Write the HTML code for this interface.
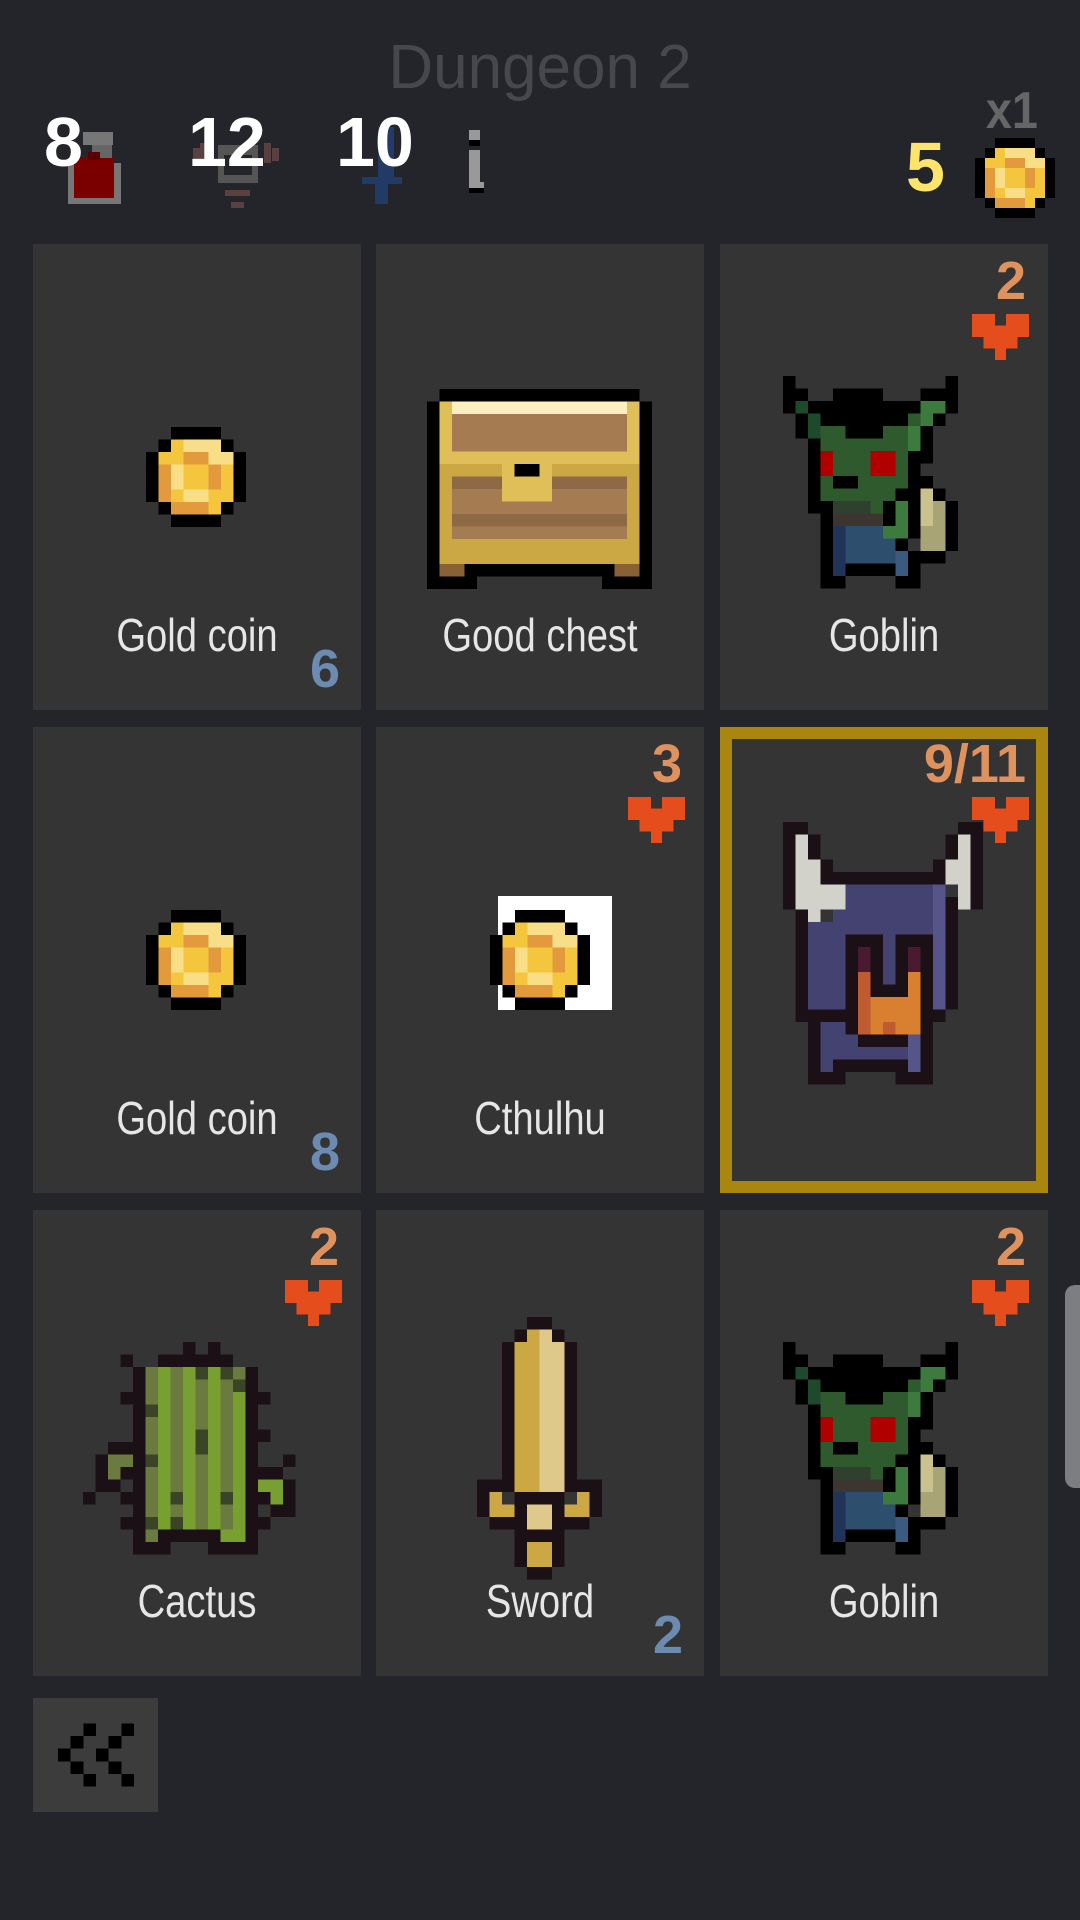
<!DOCTYPE html>
<html><head><meta charset="utf-8"><style>
*{margin:0;padding:0;box-sizing:border-box}
body{width:1080px;height:1920px;background:#23252a;position:relative;overflow:hidden;font-family:"Liberation Sans",sans-serif}
.a{position:absolute}
.card{position:absolute;width:328px;height:466px;background:#343434}
.lbl{position:absolute;left:0;width:328px;top:368px;text-align:center;color:#e6e6e6;font-size:46px;line-height:46px;transform:scaleX(0.83)}
.cnt{position:absolute;right:21px;top:398px;color:#6c8bb0;font-size:54px;line-height:54px;font-weight:bold}
.hp{position:absolute;right:22px;top:10px;color:#e0925e;font-size:54px;line-height:54px;font-weight:bold;text-align:right}
.heart{position:absolute;right:19px;top:70px;width:57px;height:46px}
svg{shape-rendering:crispEdges}
.big{font-weight:bold;color:#fff;font-size:70px;line-height:70px;top:107px}
</style></head><body>

<div class="a" style="left:0;width:1080px;top:37px;text-align:center;color:#46484c;font-size:62px;line-height:62px">Dungeon 2</div>

<!-- potion -->
<svg class="a" style="left:68px;top:132px" width="53" height="72" viewBox="0 0 53 72">
<rect x="15" y="0" width="30" height="13" fill="#777"/><rect x="24" y="13" width="20" height="15" fill="#666"/><rect x="0" y="31" width="53" height="41" fill="#777"/><rect x="6" y="26" width="40" height="40" fill="#7a0000"/><rect x="20" y="20" width="12" height="8" fill="#5a0000"/></svg>
<div class="a big" style="left:44px">8</div>
<!-- shield faint -->
<svg class="a" style="left:190px;top:140px" width="90" height="75" viewBox="0 0 90 75">
<rect x="28" y="5" width="40" height="38" fill="#555"/><rect x="34" y="15" width="28" height="20" fill="#23252a"/><rect x="3" y="8" width="8" height="13" fill="#5a4040"/><rect x="10" y="3" width="8" height="23" fill="#5a4040"/><rect x="74" y="3" width="7" height="20" fill="#5a4040"/><rect x="82" y="8" width="7" height="13" fill="#5a4040"/><rect x="35" y="50" width="25" height="6" fill="#5a4040"/><rect x="41" y="62" width="13" height="6" fill="#5a4040"/></svg>
<div class="a big" style="left:188px">12</div>
<!-- blue sword -->
<svg class="a" style="left:362px;top:127px" width="42" height="78" viewBox="0 0 42 78">
<rect x="16" y="0" width="16" height="50" fill="#223a66"/><rect x="0" y="50" width="40" height="7" fill="#223a66"/><rect x="13" y="57" width="13" height="20" fill="#223a66"/></svg>
<div class="a big" style="left:336px">10</div>
<svg class="a" style="left:468px;top:130px" width="18" height="64" viewBox="0 0 18 64">
<rect x="1" y="0" width="11" height="10" fill="#999"/><rect x="1" y="10" width="11" height="6" fill="#000"/><rect x="1" y="20" width="11" height="38" fill="#999"/><rect x="11" y="52" width="5" height="6" fill="#999"/><rect x="1" y="58" width="15" height="5" fill="#000"/></svg>

<div class="a" style="left:983px;top:85px;color:#666;font-size:52px;line-height:52px;font-weight:bold;transform:scaleX(0.9)">x1</div>
<div class="a" style="left:906px;top:132px;color:#fde46a;font-size:70px;line-height:70px;font-weight:bold">5</div>
<svg class="a" style="left:975px;top:138px" width="80" height="80" viewBox="0 0 8 8"><use href="#coin"/></svg>

<svg width="0" height="0" style="position:absolute">
<defs>
<g id="coin">
<rect x="2" y="0" width="4" height="1" fill="#000"/>
<rect x="1" y="1" width="1" height="1" fill="#000"/><rect x="2" y="1" width="1" height="1" fill="#f4c63e"/><rect x="3" y="1" width="3" height="1" fill="#f9de88"/><rect x="6" y="1" width="1" height="1" fill="#000"/>
<rect x="0" y="2" width="1" height="4" fill="#000"/><rect x="7" y="2" width="1" height="4" fill="#000"/>
<rect x="1" y="2" width="2" height="1" fill="#f4c63e"/><rect x="3" y="2" width="2" height="1" fill="#e39a3c"/><rect x="5" y="2" width="2" height="1" fill="#f9de88"/>
<rect x="1" y="3" width="1" height="2" fill="#e39a3c"/><rect x="2" y="3" width="1" height="2" fill="#f9de88"/><rect x="3" y="3" width="2" height="2" fill="#f4c63e"/><rect x="5" y="3" width="1" height="2" fill="#e39a3c"/><rect x="6" y="3" width="1" height="2" fill="#f4c63e"/>
<rect x="1" y="5" width="1" height="1" fill="#e39a3c"/><rect x="2" y="5" width="1" height="1" fill="#f4c63e"/><rect x="3" y="5" width="2" height="1" fill="#f9de88"/><rect x="5" y="5" width="2" height="1" fill="#f4c63e"/>
<rect x="1" y="6" width="1" height="1" fill="#000"/><rect x="2" y="6" width="3" height="1" fill="#e39a3c"/><rect x="5" y="6" width="1" height="1" fill="#f4c63e"/><rect x="6" y="6" width="1" height="1" fill="#000"/>
<rect x="2" y="7" width="4" height="1" fill="#000"/>
</g>
<g id="heart" fill="#e54d1c"><rect x="0" y="0" width="2" height="1"/><rect x="3" y="0" width="2" height="1"/><rect x="0" y="1" width="5" height="1"/><rect x="1" y="2" width="3" height="1"/><rect x="2" y="3" width="1" height="1"/></g>
<g id="goblin">
<g fill="#000">
<rect x="0" y="0" width="1" height="1"/><rect x="13" y="0" width="1" height="1"/>
<rect x="0" y="1" width="2" height="1"/><rect x="4" y="1" width="4" height="1"/><rect x="11" y="1" width="3" height="1"/>
<rect x="0" y="2" width="1" height="1"/><rect x="2" y="2" width="9" height="1"/><rect x="13" y="2" width="1" height="1"/>
<rect x="1" y="3" width="1" height="1"/><rect x="3" y="3" width="7" height="1"/><rect x="12" y="3" width="1" height="1"/>
<rect x="1" y="4" width="1" height="1"/><rect x="5" y="4" width="3" height="1"/><rect x="11" y="4" width="1" height="1"/>
<rect x="2" y="5" width="1" height="6"/><rect x="11" y="5" width="1" height="1"/>
<rect x="10" y="6" width="2" height="1"/><rect x="10" y="7" width="1" height="1"/>
<rect x="4" y="8" width="2" height="1"/><rect x="10" y="8" width="2" height="1"/>
<rect x="9" y="9" width="2" height="1"/><rect x="12" y="9" width="1" height="1"/>
<rect x="3" y="10" width="1" height="6"/><rect x="8" y="10" width="1" height="2"/><rect x="10" y="10" width="1" height="3"/><rect x="13" y="10" width="1" height="4"/>
<rect x="9" y="13" width="1" height="1"/><rect x="10" y="14" width="3" height="1"/>
<rect x="5" y="15" width="4" height="1"/><rect x="10" y="15" width="1" height="1"/>
<rect x="3" y="16" width="2" height="1"/><rect x="9" y="16" width="2" height="1"/>
</g>
<rect x="1" y="2" width="1" height="1" fill="#1e4a2c"/><rect x="2" y="3" width="1" height="2" fill="#1e4a2c"/>
<rect x="11" y="2" width="2" height="1" fill="#3d7a3d"/><rect x="10" y="3" width="1" height="1" fill="#2e5a2d"/><rect x="11" y="3" width="1" height="1" fill="#3d7a3d"/>
<rect x="3" y="4" width="2" height="1" fill="#2e5a2d"/><rect x="8" y="4" width="2" height="1" fill="#2e5a2d"/><rect x="10" y="4" width="1" height="2" fill="#3d7a3d"/>
<rect x="3" y="5" width="7" height="1" fill="#2e5a2d"/>
<rect x="3" y="6" width="7" height="2" fill="#2e5a2d"/><rect x="3" y="6" width="1" height="2" fill="#b00000"/><rect x="7" y="6" width="2" height="2" fill="#b00000"/>
<rect x="3" y="8" width="1" height="1" fill="#2e5a2d"/><rect x="6" y="8" width="4" height="1" fill="#2e5a2d"/>
<rect x="3" y="9" width="6" height="1" fill="#2e5a2d"/>
<rect x="4" y="10" width="3" height="1" fill="#2f402f"/><rect x="7" y="10" width="1" height="1" fill="#2e5a2d"/>
<rect x="9" y="10" width="1" height="3" fill="#3d7a3d"/><rect x="8" y="12" width="1" height="1" fill="#3d7a3d"/>
<rect x="4" y="11" width="4" height="1" fill="#3d3530"/>
<rect x="11" y="9" width="1" height="1" fill="#c9c28f"/><rect x="11" y="10" width="2" height="4" fill="#a9a476"/><rect x="11" y="10" width="1" height="2" fill="#c9c28f"/>
<rect x="4" y="12" width="1" height="4" fill="#213458"/><rect x="5" y="12" width="3" height="1" fill="#2e4e6e"/><rect x="5" y="13" width="4" height="2" fill="#2e4e6e"/><rect x="9" y="14" width="1" height="2" fill="#3a5a80"/>
</g>
</defs></svg>

<!-- Row 1 -->
<div class="card" style="left:33px;top:244px">
<svg class="a" style="left:113px;top:183px" width="100" height="100" viewBox="0 0 8 8"><use href="#coin"/></svg>
<div class="lbl">Gold coin</div><div class="cnt">6</div></div>

<div class="card" style="left:376px;top:244px">
<svg class="a" style="left:51px;top:145px" width="225" height="200" viewBox="0 0 18 16">
<rect x="1" y="0" width="16" height="1" fill="#000"/><rect x="0" y="1" width="1" height="15" fill="#000"/><rect x="17" y="1" width="1" height="15" fill="#000"/>
<rect x="1" y="1" width="16" height="13" fill="#e0bf58"/><rect x="2" y="1" width="14" height="1" fill="#fdf0c0"/><rect x="2" y="2" width="14" height="3" fill="#a57c52"/>
<rect x="1" y="6" width="16" height="7" fill="#cba843"/><rect x="2" y="7" width="14" height="5" fill="#a57c52"/><rect x="2" y="7" width="14" height="1" fill="#8d6a45"/><rect x="2" y="10" width="14" height="1" fill="#8d6a45"/>
<rect x="6" y="6" width="4" height="3" fill="#e0bf58"/><rect x="7" y="6" width="2" height="1" fill="#000"/>
<rect x="1" y="13" width="16" height="1" fill="#cba843"/>
<rect x="1" y="14" width="16" height="2" fill="#000"/><rect x="1" y="14" width="2" height="1" fill="#8a6135"/><rect x="15" y="14" width="2" height="1" fill="#8a6135"/><rect x="4" y="15" width="10" height="1" fill="#343434"/>
</svg>
<div class="lbl">Good chest</div></div>

<div class="card" style="left:720px;top:244px">
<svg class="a" style="left:63px;top:132px" width="175" height="212.5" viewBox="0 0 14 17"><use href="#goblin"/></svg>
<div class="hp">2</div><svg class="heart" viewBox="0 0 5 4"><use href="#heart"/></svg>
<div class="lbl">Goblin</div></div>

<!-- Row 2 -->
<div class="card" style="left:33px;top:727px">
<svg class="a" style="left:113px;top:183px" width="100" height="100" viewBox="0 0 8 8"><use href="#coin"/></svg>
<div class="lbl">Gold coin</div><div class="cnt">8</div></div>

<div class="card" style="left:376px;top:727px">
<div class="a" style="left:122px;top:169px;width:114px;height:114px;background:#fff"></div>
<svg class="a" style="left:114px;top:183px" width="100" height="100" viewBox="0 0 8 8"><use href="#coin"/></svg>
<div class="hp">3</div><svg class="heart" viewBox="0 0 5 4"><use href="#heart"/></svg>
<div class="lbl">Cthulhu</div></div>

<div class="card" style="left:720px;top:727px;border:12px solid #a8860f">
<svg class="a" style="left:51px;top:83px" width="200" height="262.5" viewBox="0 0 16 21">
<g fill="#1b1016">
<rect x="0" y="0" width="2" height="1"/><rect x="14" y="0" width="2" height="1"/>
<rect x="0" y="1" width="1" height="6"/><rect x="15" y="1" width="1" height="6"/>
<rect x="2" y="1" width="1" height="2"/><rect x="13" y="1" width="1" height="2"/>
<rect x="3" y="3" width="1" height="2"/><rect x="12" y="3" width="1" height="2"/>
<rect x="3" y="4" width="10" height="1"/>
<rect x="1" y="6" width="1" height="10"/><rect x="13" y="6" width="1" height="9"/><rect x="14" y="6" width="1" height="1"/>
<rect x="1" y="15" width="5" height="1"/><rect x="12" y="15" width="1" height="1"/>
<rect x="5" y="9" width="3" height="1"/><rect x="9" y="9" width="3" height="1"/>
<rect x="5" y="10" width="1" height="7"/><rect x="7" y="10" width="1" height="4"/><rect x="9" y="10" width="1" height="4"/><rect x="11" y="10" width="1" height="7"/>
<rect x="7" y="13" width="3" height="1"/>
<rect x="2" y="16" width="1" height="5"/><rect x="11" y="16" width="1" height="5"/>
<rect x="6" y="17" width="4" height="1"/><rect x="4" y="19" width="6" height="1"/>
<rect x="2" y="20" width="3" height="1"/><rect x="9" y="20" width="3" height="1"/>
</g>
<g fill="#d2d2ca"><rect x="1" y="1" width="1" height="6"/><rect x="2" y="3" width="1" height="5"/><rect x="3" y="5" width="2" height="2"/><rect x="14" y="1" width="1" height="6"/><rect x="13" y="3" width="1" height="2"/></g>
<rect x="5" y="5" width="7" height="4" fill="#434270"/><rect x="4" y="7" width="1" height="2" fill="#434270"/><rect x="2" y="8" width="3" height="7" fill="#434270"/><rect x="8" y="9" width="1" height="4" fill="#434270"/>
<rect x="12" y="5" width="1" height="10" fill="#55558a"/>
<rect x="6" y="10" width="1" height="2" fill="#4a1a30"/><rect x="10" y="10" width="1" height="2" fill="#4a1a30"/>
<rect x="6" y="12" width="1" height="5" fill="#c05a30"/><rect x="10" y="12" width="1" height="3" fill="#d8802f"/><rect x="7" y="14" width="4" height="3" fill="#d8802f"/><rect x="8" y="16" width="1" height="1" fill="#c05a30"/>
<rect x="3" y="16" width="2" height="3" fill="#434270"/><rect x="5" y="17" width="1" height="2" fill="#434270"/><rect x="6" y="18" width="4" height="1" fill="#434270"/><rect x="10" y="17" width="1" height="3" fill="#55558a"/><rect x="3" y="19" width="1" height="1" fill="#434270"/>
</svg>
<div class="hp" style="right:10px;top:-2px">9/11</div><svg class="heart" style="right:7px;top:58px" viewBox="0 0 5 4"><use href="#heart"/></svg>
</div>

<!-- Row 3 -->
<div class="card" style="left:33px;top:1210px">
<svg class="a" style="left:50px;top:132px" width="212.5" height="212.5" viewBox="0 0 17 17">
<g fill="#6b7a3e"><rect x="5" y="2" width="8" height="13"/></g>
<g fill="#77a030"><rect x="6" y="2" width="1" height="13"/><rect x="8" y="2" width="1" height="13"/><rect x="10" y="2" width="1" height="13"/><rect x="12" y="3" width="1" height="13"/></g>
<g fill="#3a4528"><rect x="9" y="2" width="1" height="1"/><rect x="11" y="2" width="1" height="1"/><rect x="12" y="3" width="1" height="1"/><rect x="5" y="5" width="1" height="1"/><rect x="9" y="7" width="1" height="2"/><rect x="5" y="9" width="1" height="1"/><rect x="7" y="12" width="1" height="1"/><rect x="11" y="12" width="1" height="1"/><rect x="5" y="14" width="1" height="1"/><rect x="7" y="14" width="1" height="1"/></g>
<g fill="#1b1016">
<rect x="8" y="0" width="1" height="1"/><rect x="10" y="0" width="1" height="1"/>
<rect x="3" y="1" width="1" height="1"/><rect x="6" y="1" width="6" height="1"/>
<rect x="4" y="2" width="1" height="15"/><rect x="13" y="2" width="1" height="15"/>
<rect x="3" y="4" width="1" height="1"/><rect x="14" y="4" width="1" height="1"/><rect x="14" y="7" width="1" height="1"/>
<rect x="2" y="8" width="2" height="1"/><rect x="1" y="9" width="1" height="3"/><rect x="3" y="10" width="1" height="1"/><rect x="2" y="11" width="1" height="1"/><rect x="0" y="12" width="1" height="1"/><rect x="3" y="12" width="1" height="1"/><rect x="3" y="14" width="1" height="1"/>
<rect x="16" y="9" width="1" height="1"/><rect x="14" y="10" width="2" height="1"/><rect x="16" y="11" width="1" height="3"/><rect x="14" y="12" width="1" height="1"/><rect x="15" y="13" width="1" height="1"/><rect x="14" y="14" width="1" height="1"/>
<rect x="6" y="15" width="5" height="1"/><rect x="4" y="16" width="3" height="1"/><rect x="10" y="16" width="4" height="1"/>
</g>
<rect x="2" y="9" width="1" height="2" fill="#6b7a3e"/><rect x="3" y="9" width="1" height="1" fill="#6b7a3e"/>
<rect x="14" y="11" width="2" height="1" fill="#77a030"/><rect x="15" y="12" width="1" height="1" fill="#77a030"/>
<rect x="5" y="15" width="1" height="1" fill="#6b7a3e"/><rect x="11" y="15" width="2" height="1" fill="#77a030"/>
</svg>
<div class="hp">2</div><svg class="heart" viewBox="0 0 5 4"><use href="#heart"/></svg>
<div class="lbl">Cactus</div></div>

<div class="card" style="left:376px;top:1210px">
<svg class="a" style="left:101px;top:107px" width="125" height="262.5" viewBox="0 0 10 21">
<g fill="#1b1016">
<rect x="4" y="0" width="2" height="1"/><rect x="3" y="1" width="1" height="1"/><rect x="6" y="1" width="1" height="1"/>
<rect x="2" y="2" width="1" height="12"/><rect x="7" y="2" width="1" height="12"/>
<rect x="0" y="13" width="2" height="3"/><rect x="8" y="13" width="2" height="3"/>
<rect x="3" y="14" width="4" height="1"/><rect x="3" y="15" width="1" height="1"/><rect x="6" y="15" width="1" height="1"/>
<rect x="1" y="16" width="3" height="1"/><rect x="6" y="16" width="3" height="1"/>
<rect x="3" y="17" width="4" height="1"/><rect x="3" y="18" width="1" height="2"/><rect x="6" y="18" width="1" height="2"/><rect x="4" y="20" width="2" height="1"/>
</g>
<rect x="4" y="1" width="1" height="1" fill="#cca845"/><rect x="5" y="1" width="1" height="1" fill="#dfc98a"/>
<rect x="3" y="2" width="2" height="12" fill="#cca845"/><rect x="5" y="2" width="2" height="12" fill="#dfc98a"/>
<rect x="1" y="14" width="1" height="2" fill="#cca845"/><rect x="2" y="15" width="1" height="1" fill="#cca845"/><rect x="8" y="14" width="1" height="2" fill="#cca845"/><rect x="7" y="15" width="1" height="1" fill="#cca845"/>
<rect x="4" y="15" width="2" height="2" fill="#dfc98a"/>
<rect x="4" y="18" width="2" height="2" fill="#cca845"/>
</svg>
<div class="lbl">Sword</div><div class="cnt">2</div></div>

<div class="card" style="left:720px;top:1210px">
<svg class="a" style="left:63px;top:132px" width="175" height="212.5" viewBox="0 0 14 17"><use href="#goblin"/></svg>
<div class="hp">2</div><svg class="heart" viewBox="0 0 5 4"><use href="#heart"/></svg>
<div class="lbl">Goblin</div></div>

<!-- back button -->
<div class="a" style="left:33px;top:1698px;width:125px;height:114px;background:#3c3c3c"></div>
<svg class="a" style="left:58px;top:1723px" width="76" height="64" viewBox="0 0 6 5">
<g fill="#000"><rect x="2" y="0" width="1" height="1"/><rect x="1" y="1" width="1" height="1"/><rect x="0" y="2" width="1" height="1"/><rect x="1" y="3" width="1" height="1"/><rect x="2" y="4" width="1" height="1"/>
<rect x="5" y="0" width="1" height="1"/><rect x="4" y="1" width="1" height="1"/><rect x="3" y="2" width="1" height="1"/><rect x="4" y="3" width="1" height="1"/><rect x="5" y="4" width="1" height="1"/></g></svg>

<div class="a" style="left:1065px;top:1285px;width:15px;height:203px;background:#7c7e82;border-radius:10px 0 0 10px"></div>
</body></html>
